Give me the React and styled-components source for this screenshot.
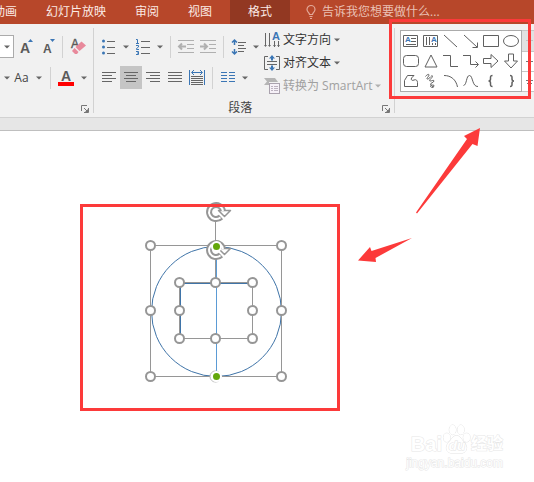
import React from 'react';
import styled, { createGlobalStyle } from 'styled-components';

const GlobalStyle = createGlobalStyle`
  * {
    box-sizing: border-box;
  }

  body {
    margin: 0;
    background: #ffffff;
    font-family: 'Open Sans', 'Noto Sans CJK SC', sans-serif;
    font-size: 12px;
    color: #444444;
    overflow: hidden;
  }

  button {
    font: inherit;
    color: inherit;
    background: none;
    border: 0;
    padding: 0;
  }

  svg {
    display: block;
    flex: none;
    overflow: visible;
    font-family: 'Liberation Sans', sans-serif;
  }
`;

const Page = styled.main`
  position: relative;
  min-height: 100vh;
  display: flex;
  flex-direction: column;
  overflow: hidden;
`;

const TabBar = styled.nav`
  display: flex;
  align-items: stretch;
  gap: 1px;
  height: 24px;
  margin-left: -21px;
  background: #b7472a;
  white-space: nowrap;
`;

const Tab = styled.button`
  padding: 0 ${({ $active }) => ($active ? 18 : 14)}px;
  margin-left: ${({ $active }) => ($active ? 3 : 0)}px;
  background: ${({ $active }) => ($active ? '#923822' : 'transparent')};
  color: #fbeae5;
  line-height: 20px;
`;

const TellMe = styled.button`
  display: flex;
  align-items: center;
  gap: 6px;
  padding: 0 15px;
  color: #eac0b4;
  line-height: 20px;
`;

const Ribbon = styled.section`
  display: flex;
  height: 94px;
  padding: 4px 0;
  background: #f1f1f1;
  border-bottom: 1px solid #d2d2d2;
`;

const Group = styled.div`
  display: flex;
  flex-direction: column;
  flex: none;
  padding: 0 4px;
  border-right: 1px solid #d2d2d2;
`;

const GroupBody = styled.div`
  display: flex;
  flex: 1;
`;

const GroupFooter = styled.div`
  display: flex;
  align-items: flex-end;
  height: 12px;
`;

const GroupLabel = styled.span`
  flex: 1;
  text-align: center;
  line-height: 10px;
`;

const Rows = styled.div`
  display: flex;
  flex-direction: column;
  gap: 8px;
  padding-top: 7px;
`;

const Row = styled.div`
  display: flex;
  align-items: center;
  height: 23px;
`;

const buttonWidths = { single: 22, split: 34, wide: 36 };

const ToolButton = styled.button`
  display: flex;
  align-items: center;
  justify-content: center;
  gap: 7px;
  height: 23px;
  width: ${({ $size }) => buttonWidths[$size || 'single']}px;
  background: ${({ $pressed }) => ($pressed ? '#c5c5c5' : 'transparent')};
`;

const Divider = styled.span`
  width: 1px;
  height: 22px;
  margin: 0 4px;
  background: #d2d2d2;
`;

const SizeBox = styled.label`
  display: grid;
  place-items: center;
  width: 14px;
  height: 23px;
  margin-left: -4px;
  background: #ffffff;
  border: 1px solid #ababab;
  border-left: 0;

  > * {
    grid-area: 1 / 1;
  }

  select {
    appearance: none;
    width: 100%;
    height: 100%;
    border: 0;
    background: transparent;
  }
`;

const TextTools = styled.div`
  display: flex;
  flex-direction: column;
  padding: 0 9px 0 2px;
`;

const TextTool = styled.button`
  display: flex;
  align-items: center;
  gap: 3px;
  height: 23px;
  line-height: 20px;
  white-space: nowrap;
  color: ${({ disabled }) => (disabled ? '#a0a0a0' : '#333333')};
`;

const Drawing = styled.div`
  display: flex;
  flex: 1;
  align-items: flex-start;
  padding: 2px 0 0 5px;
`;

const Gallery = styled.div`
  display: grid;
  grid-template-columns: repeat(6, 20px);
  grid-auto-rows: 20px;
  flex: none;
  background: #ffffff;
  border: 1px solid #ababab;
`;

const ShapeButton = styled.button`
  display: grid;
  place-items: center;
`;

const Scroller = styled.div`
  display: flex;
  flex-direction: column;
  flex: none;
  width: 16px;
  border: 1px solid #c6c6c6;
  border-left: 0;
`;

const ScrollButton = styled.button`
  display: grid;
  place-items: center;
  height: 20px;
  background: ${({ disabled }) => (disabled ? '#e1e1e1' : '#ffffff')};

  & + & {
    border-top: 1px solid #c6c6c6;
  }
`;

const Ruler = styled.div`
  height: 13px;
  background: #e6e6e6;
  border-bottom: 1px solid #bfbfbf;
`;

const Slide = styled.section`
  position: relative;
  flex: 1;
`;

const Drawn = styled.svg`
  position: absolute;
  left: ${({ $x }) => $x}px;
  top: ${({ $y }) => $y}px;
`;

const Frame = styled.div`
  position: absolute;
  left: ${({ $x }) => $x}px;
  top: ${({ $y }) => $y}px;
  width: ${({ $w }) => $w}px;
  height: ${({ $h }) => $h}px;
  border: 3px solid #fc3a3a;
`;

const Watermark = styled.div`
  position: absolute;
  right: 31px;
  bottom: 11px;
  color: #ffffff;
  font-family: 'Liberation Sans', 'Noto Sans CJK SC', sans-serif;
  -webkit-text-stroke: 1px #e6e6e6;
  paint-order: stroke fill;
`;

const Brand = styled.div`
  display: flex;
  align-items: flex-end;
  justify-content: flex-end;
  font-weight: bold;
  font-size: 20px;
  line-height: 22px;

  span:last-child {
    font-size: 16px;
  }
`;

const Site = styled.div`
  font-size: 12px;
  line-height: 16px;
`;

const Caret = ({ color = '#666666' }) => (
  <svg width="6" height="4" viewBox="0 0 6 4">
    <path d="M0 .5h6L3 3.5z" fill={color} />
  </svg>
);

const Launcher = () => (
  <svg width="8" height="8" viewBox="0 0 8 8" fill="none" stroke="#777777">
    <path d="M.5 6V.5H6M3 3l3.500 3.500M7.500 3v4.500H3" />
    <path d="M7 4v3H4z" fill="#777777" stroke="none" />
  </svg>
);

const Lines = ({ rows, color = '#666666', width = 14 }) => (
  <svg width={width} height="11" viewBox={`0 0 ${width} 11`} shapeRendering="crispEdges">
    {rows.map(([x, w], i) => (
      <rect key={i} x={x} y={i * 3} width={w} height="1" fill={color} />
    ))}
  </svg>
);

const GrowIcon = () => (
  <svg width="14" height="16" viewBox="0 0 14 16">
    <text x="2" y="14" fontSize="14" fontWeight="bold" fill="#5a5a5a">A</text>
    <path d="M10 3h5l-2.500-3z" fill="#3b76b5" />
  </svg>
);

const ShrinkIcon = () => (
  <svg width="14" height="16" viewBox="0 0 14 16">
    <text x="3" y="14" fontSize="12" fontWeight="bold" fill="#5a5a5a">A</text>
    <path d="M10 0h5l-2.500 3z" fill="#3b76b5" />
  </svg>
);

const EraserIcon = () => (
  <svg width="16" height="18" viewBox="0 0 16 18">
    <text x="1" y="10" fontSize="12" fill="#5a5a5a" stroke="#5a5a5a" strokeWidth=".4">A</text>
    <path d="M5.500 9L11.500 3.500 16 7.500 9.500 13z" fill="#e8899b" />
    <path d="M4.500 10l4 4-1.500 2H5l-3-3z" fill="#e8899b" />
  </svg>
);

const FontColorIcon = () => (
  <svg width="16" height="16" viewBox="0 0 16 16">
    <text x="3" y="11" fontSize="14" fontWeight="bold" fill="#5a5a5a">A</text>
    <rect y="12" width="16" height="4" fill="#ff0000" />
  </svg>
);

const BulletsIcon = () => (
  <svg width="14" height="16" viewBox="0 0 14 16">
    <g fill="#3b76b5">
      <circle cx="1.500" cy="2" r="1.500" />
      <circle cx="1.500" cy="8" r="1.500" />
      <circle cx="1.500" cy="14" r="1.500" />
    </g>
    <path d="M5 2.500h8M5 8.500h8M5 14.500h8" stroke="#666666" />
  </svg>
);

const NumberingIcon = () => (
  <svg width="14" height="16" viewBox="0 0 14 16">
    <g fill="none" stroke="#3b76b5">
      <path d="M0 .5h1.500V4M0 4.500h3M0 6.500h2.500V8L.5 9.500v1H3M0 12.500h2.500v3H0M1 14h1.500" />
    </g>
    <path d="M5 2.500h9M5 8.500h9M5 14.500h9" stroke="#666666" />
  </svg>
);

const IndentIcon = ({ right }) => (
  <svg width="16" height="14" viewBox="0 0 16 14" fill="none" stroke="#b0b0b0">
    <path d="M0 .5h16M9 4.500h7M9 8.500h7M0 12.500h16" />
    <path d={right ? 'M0 6.500h7M4 3.500l3 3-3 3' : 'M1 6.500h7M4 3.500l-3 3 3 3'} strokeWidth="2" />
  </svg>
);

const SpacingIcon = () => (
  <svg width="14" height="16" viewBox="0 0 14 16" fill="none">
    <path d="M2.500 1v5M0 3.500L2.500 1 5 3.500M2.500 15v-5M0 12.500L2.500 15 5 12.500" stroke="#3b76b5" strokeWidth="1.500" />
    <path d="M6 3.500h8M6 6.500h6M6 9.500h8M6 12.500h6" stroke="#666666" />
  </svg>
);

const DistributeIcon = () => (
  <svg width="16" height="16" viewBox="0 0 16 16" fill="none">
    <path d="M.5 0v15M15.500 0v15M3 2.500h10M5 0L2.500 2.500 5 5M11 0l2.500 2.500L11 5" stroke="#3b76b5" />
    <path d="M2 6.500h12M2 8.500h12M2 10.500h12M2 12.500h12M2 14.500h12" stroke="#666666" />
  </svg>
);

const ColumnsIcon = () => (
  <svg width="14" height="11" viewBox="0 0 14 11" stroke="#3b76b5">
    <path d="M0 .5h6M8 .5h6M0 3.500h6M8 3.500h6M0 6.500h6M8 6.500h6M0 9.500h6M8 9.500h6" />
  </svg>
);

const DirectionIcon = () => (
  <svg width="16" height="16" viewBox="0 0 16 16">
    <path d="M1.500 1v13M5.500 1v13M10.500 9v6M14.500 9v6" stroke="#666666" />
    <path d="M0 13h3l-1.500 2zM4 13h3l-1.500 2zM9 13h3l-1.500 2zM13 13h3l-1.500 2z" fill="#666666" />
    <text x="8" y="8" fontSize="11" fontWeight="bold" fill="#3b76b5">A</text>
  </svg>
);

const AlignTextIcon = () => (
  <svg width="16" height="16" viewBox="0 0 16 16" fill="none">
    <path d="M4 1.500H.5v13H4M12 1.500h3.500v13H12M3 6.500h10M3 9.500h10" stroke="#666666" />
    <path d="M8 1v4.500M8 15v-4.500" stroke="#3b76b5" strokeWidth="2" />
    <path d="M5 3.500L8 0l3 3.500zM5 12.500L8 16l3-3.500z" fill="#3b76b5" />
  </svg>
);

const SmartArtIcon = () => (
  <svg width="16" height="16" viewBox="0 0 16 16">
    <path d="M0 0h11l3 4H5v3H0l3-3.500z" fill="#b5b5b5" />
    <rect x="5.500" y="5.500" width="10" height="10" fill="#f6f1f8" stroke="#aaa2ae" />
    <path d="M7 8.500h2M10 8.500h4M7 10.500h2M10 10.500h4M7 12.500h2M10 12.500h4" stroke="#bcb3c0" />
  </svg>
);

const BulbIcon = () => (
  <svg width="10" height="14" viewBox="0 0 10 14" fill="none" stroke="#e3a999" strokeWidth="1.200">
    <path d="M3.500 9.500C3.500 7.500 1 7 1 4.500a4 4 0 0 1 8 0C9 7 6.500 7.500 6.500 9.500zM3.500 11.500h3M4 13.500h2" />
  </svg>
);

const shapes = [
  ['Text box', <><path d="M.5 2.500h14v11H.5zM8 5.500h5M8 8.500h5M3 11.500h10" /><text x="2" y="9" fontSize="8" fontWeight="bold" fill="#3b76b5" stroke="none">A</text></>],
  ['Vertical text box', <><path d="M.5 2.500h14v11H.5zM3.500 4v8M6.500 4v8M9.500 10v2M12.500 10v2" /><text x="8" y="9" fontSize="8" fontWeight="bold" fill="#3b76b5" stroke="none">A</text></>],
  ['Line', <path d="M1 2l13 12" />],
  ['Arrow', <path d="M1 2l13 12M14.500 9.500v5h-5" />],
  ['Rectangle', <path d="M.5 2.500h15v11H.5z" />],
  ['Oval', <ellipse cx="8" cy="8" rx="7.500" ry="5.500" />],
  ['Rounded rectangle', <rect x=".5" y="2.500" width="15" height="11" rx="3" />],
  ['Triangle', <path d="M8 2l6 12H2z" />],
  ['Elbow connector', <path d="M0 2.500h7.500v11H15" />],
  ['Elbow arrow', <path d="M0 2.500h7.500v9H15M12.500 8.500l3 3-3 3" />],
  ['Right arrow', <path d="M.5 5.500H8V1.500L15 8l-7 6.500v-4H.5z" />],
  ['Down arrow', <path d="M5.500 1v7h-4L8 15l6.500-7h-4V1z" />],
  ['Freeform', <path d="M4.500 2.500h6.500L8.500 5c-1 2 1 3 2.500 2 2-1 3.500.5 3.500 2.500v4H1.500v-6z" />],
  ['Scribble', <path d="M2.500 3.500C3.500 2 6 .5 6 2S2.500 6 4.500 6 9 1.500 9.500 3 5 7.500 7 8c2 0 4-1.500 4 0s-4 2-3.500 3.500S11.500 11 11 13s-4 1.500-3.500 0 2-.5 2.500 2" />],
  ['Arc', <path d="M1 2.500c7 0 12 4 13.500 11.500" />],
  ['Curve', <path d="M.5 12.500C4 12 3 2.500 6.500 2.500S9 14 15 13.500" />],
  ['Left brace', <path d="M9.500 2.500c-2 0-2 .5-2 2v1.500c0 1.500-.5 2-2 2 1.500 0 2 .5 2 2v1.500c0 1.500 0 2 2 2" strokeWidth="1.500" />],
  ['Right brace', <path d="M7 2.500c2 0 2 .5 2 2v1.500c0 1.500.5 2 2 2-1.500 0-2 .5-2 2v1.500c0 1.500 0 2-2 2" strokeWidth="1.500" />],
];

const handles = [
  [70.5, 114.5], [201.5, 114.5],
  [70.5, 179.5], [201.5, 179.5],
  [70.5, 245.5], [201.5, 245.5],
  [99.5, 151.5], [135.5, 151.5], [172.5, 151.5],
  [99.5, 179.5], [172.5, 179.5],
  [99.5, 207.5], [135.5, 207.5], [172.5, 207.5],
];

const RotateHandle = ({ x, y }) => (
  <g transform={`translate(${x} ${y})`} fill="none" strokeLinejoin="round">
    <circle r="6" fill="#ffffff" />
    <path d="M5 5A7 7 0 1 1 7-1" stroke="#969696" strokeWidth="6" />
    <path d="M2.500-1.500h12L8.500 4.500z" fill="#ffffff" stroke="#969696" strokeWidth="1.500" />
    <path d="M4.500 5.500A7 7 0 1 1 7-1" stroke="#ffffff" strokeWidth="2" />
  </g>
);

const SelectedShapes = () => (
  <Drawn $x={80} $y={0} width="260" height="270" viewBox="0 0 260 270" fill="none">
    <g stroke="#3f74a8">
      <circle cx="136.500" cy="180.500" r="65" />
      <rect x="100.500" y="152.500" width="72" height="55" />
    </g>
    <g stroke="#969696">
      <rect x="70.500" y="114.500" width="131" height="131" />
      <rect x="99.500" y="151.500" width="73" height="56" />
      <path d="M135.500 81v70" />
    </g>
    <path d="M136.500 118v128" stroke="#5b9bd5" />
    {handles.map(([x, y]) => (
      <circle key={`${x}-${y}`} cx={x} cy={y} r="4.500" fill="#ffffff" stroke="#969696" strokeWidth="2" />
    ))}
    <RotateHandle x={136} y={81} />
    <RotateHandle x={136} y={119} />
    <circle cx="135.500" cy="245.500" r="5.500" fill="#ffffff" stroke="#b5b5b5" />
    <circle cx="136.500" cy="115.500" r="4.500" fill="#63a70a" stroke="#ffffff" strokeWidth="2" />
    <circle cx="136.500" cy="245.500" r="4.500" fill="#63a70a" stroke="#ffffff" strokeWidth="2" />
  </Drawn>
);

const PawLogo = () => (
  <svg width="29" height="31" viewBox="0 0 30 32" fill="#ffffff" stroke="#e2e2e2">
    <ellipse cx="5" cy="14" rx="3.500" ry="4.500" />
    <ellipse cx="11" cy="6" rx="3.500" ry="5" />
    <ellipse cx="19.500" cy="6" rx="3.500" ry="5" />
    <ellipse cx="25.500" cy="14" rx="3.500" ry="4.500" />
    <path d="M15 12c4 0 5 4 8 7 4 4 3 10-2 11H9c-5-1-6-7-2-11 3-3 4-7 8-7z" />
    <text x="7" y="27" fontSize="14" fontWeight="bold" fontStyle="italic">du</text>
  </svg>
);

const tabs = ['动画', '幻灯片放映', '审阅', '视图', '格式'];

const FontGroup = () => (
  <Group>
    <GroupBody>
      <Rows>
        <Row>
          <SizeBox>
            <select aria-label="Font size" />
            <Caret />
          </SizeBox>
          <ToolButton aria-label="Increase font size"><GrowIcon /></ToolButton>
          <ToolButton aria-label="Decrease font size"><ShrinkIcon /></ToolButton>
          <Divider />
          <ToolButton aria-label="Clear formatting"><EraserIcon /></ToolButton>
        </Row>
        <Row>
          <Caret />
          <ToolButton $size="wide" aria-label="Change case">Aa<Caret /></ToolButton>
          <Divider />
          <ToolButton $size="split" aria-label="Font colour"><FontColorIcon /><Caret /></ToolButton>
        </Row>
      </Rows>
    </GroupBody>
    <GroupFooter>
      <GroupLabel />
      <Launcher />
    </GroupFooter>
  </Group>
);

const ParagraphGroup = () => (
  <Group>
    <GroupBody>
      <Rows>
        <Row>
          <ToolButton $size="split" aria-label="Bullets"><BulletsIcon /><Caret /></ToolButton>
          <ToolButton $size="split" aria-label="Numbering"><NumberingIcon /><Caret /></ToolButton>
          <Divider />
          <ToolButton disabled aria-label="Decrease indent"><IndentIcon /></ToolButton>
          <ToolButton disabled aria-label="Increase indent"><IndentIcon right /></ToolButton>
          <Divider />
          <ToolButton $size="split" aria-label="Line spacing"><SpacingIcon /><Caret /></ToolButton>
        </Row>
        <Row>
          <ToolButton aria-label="Align left"><Lines rows={[[0, 14], [0, 10], [0, 14], [0, 10]]} /></ToolButton>
          <ToolButton $pressed aria-label="Centre"><Lines rows={[[0, 14], [2, 10], [0, 14], [2, 10]]} /></ToolButton>
          <ToolButton aria-label="Align right"><Lines rows={[[0, 14], [4, 10], [0, 14], [4, 10]]} /></ToolButton>
          <ToolButton aria-label="Justify"><Lines rows={[[0, 14], [0, 14], [0, 14], [0, 14]]} /></ToolButton>
          <ToolButton aria-label="Distribute"><DistributeIcon /></ToolButton>
          <Divider />
          <ToolButton $size="split" aria-label="Columns"><ColumnsIcon /><Caret /></ToolButton>
        </Row>
      </Rows>
      <TextTools>
        <TextTool><DirectionIcon />文字方向<Caret /></TextTool>
        <TextTool><AlignTextIcon />对齐文本<Caret /></TextTool>
        <TextTool disabled><SmartArtIcon />转换为 SmartArt<Caret color="#b0b0b0" /></TextTool>
      </TextTools>
    </GroupBody>
    <GroupFooter>
      <GroupLabel>段落</GroupLabel>
      <Launcher />
    </GroupFooter>
  </Group>
);

const ScrollMark = ({ color = '#777777', double }) => (
  <svg width="7" height="6" viewBox="0 0 7 6" stroke={color}>
    <path d={double ? 'M0 1.500h7M1 4.500h5' : 'M0 2.500h7'} />
  </svg>
);

const ShapeGallery = () => (
  <Drawing>
    <Gallery>
      {shapes.map(([name, art]) => (
        <ShapeButton key={name} aria-label={name}>
          <svg width="16" height="16" viewBox="0 0 16 16" fill="none" stroke="#606060">{art}</svg>
        </ShapeButton>
      ))}
    </Gallery>
    <Scroller>
      <ScrollButton disabled aria-label="Previous row"><ScrollMark color="#c0c0c0" /></ScrollButton>
      <ScrollButton aria-label="Next row"><ScrollMark /></ScrollButton>
      <ScrollButton aria-label="More shapes"><ScrollMark double /></ScrollButton>
    </Scroller>
  </Drawing>
);

const App = () => (
  <Page>
    <GlobalStyle />
    <TabBar>
      {tabs.map((name) => (
        <Tab key={name} $active={name === '格式'}>{name}</Tab>
      ))}
      <TellMe><BulbIcon />告诉我您想要做什么...</TellMe>
    </TabBar>
    <Ribbon>
      <FontGroup />
      <ParagraphGroup />
      <ShapeGallery />
    </Ribbon>
    <Ruler />
    <Slide>
      <SelectedShapes />
      <Watermark>
        <Brand><span>Bai</span><PawLogo /><span>经验</span></Brand>
        <Site>jingyan.baidu.com</Site>
      </Watermark>
    </Slide>
    <Frame $x={389} $y={19} $w={142} $h={80} />
    <Frame $x={80} $y={204} $w={260} $h={207} />
    <Drawn $x={350} $y={120} width="150" height="150" viewBox="0 0 150 150" fill="#fc3a3a">
      <path d="M130 8l-2.500 18-5-2L67 93.500l-1-1L117 19l-3-3z" />
      <path d="M8 140.500L20 127l1.500 4L62 118 25.500 138l.5 4z" />
    </Drawn>
  </Page>
);

export default App;
